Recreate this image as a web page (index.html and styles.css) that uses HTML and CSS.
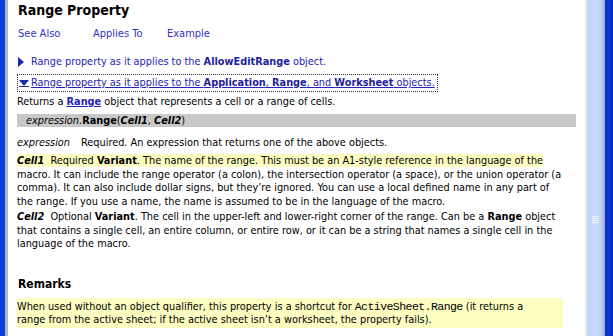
FILE: index.html
```html
<!DOCTYPE html>
<html>
<head>
<meta charset="utf-8">
<link rel="stylesheet" href="styles.css">
</head>
<body>
<div class="window">
  <div class="lborder"></div>
  <div class="content">
    <h1 class="title">Range Property</h1>
    <div class="navlinks">
      <a class="nav">See Also</a>
      <a class="nav">Applies To</a>
      <a class="nav">Example</a>
    </div>
    <div class="applies">
      <span class="tri-right"></span>
      <span class="lnk">Range property as it applies to the <b>AllowEditRange</b> object.</span>
    </div>
    <div class="applies open">
      <span class="focus"><span class="tri-down"></span><span class="lnk u">Range property as it applies to the <b>Application</b>, <b>Range</b>, and <b>Worksheet</b> objects.</span></span>
    </div>
    <p class="para returns">Returns a <a class="reflink">Range</a> object that represents a cell or a range of cells.</p>
    <div class="syntax"><i>expression</i>.<b>Range</b>(<b><i>Cell1</i></b>, <b><i>Cell2</i></b>)</div>
    <p class="para expr"><i class="term">expression</i>Required. An expression that returns one of the above objects.</p>
    <p class="para arg first"><span class="hl"><b><i class="argname">Cell1</i></b>&nbsp;&nbsp;Required <b>Variant</b>. The name of the range. This must be an A1-style reference in the language of the</span> macro. It can include the range operator (a colon), the intersection operator (a space), or the union operator (a comma). It can also include dollar signs, but they’re ignored. You can use a local defined name in any part of the range. If you use a name, the name is assumed to be in the language of the macro.</p>
    <p class="para arg second"><b><i>Cell2</i></b>&nbsp;&nbsp;Optional <b>Variant</b>. The cell in the upper-left and lower-right corner of the range. Can be a <b>Range</b> object that contains a single cell, an entire column, or entire row, or it can be a string that names a single cell in the language of the macro.</p>
    <h2 class="remarks">Remarks</h2>
    <p class="para note">When used without an object qualifier, this property is a shortcut for <code>ActiveSheet.Range</code> (it returns a range from the active sheet; if the active sheet isn’t a worksheet, the property fails).</p>
  </div>
  <div class="vscroll">
    <div class="thumb"><span class="grip"></span></div>
  </div>
  <div class="rborder"></div>
</div>
</body>
</html>
```

FILE: styles.css
```css
html, body {
  margin: 0;
  padding: 0;
  height: 100%;
  overflow: hidden;
  background: #fff;
}
.window {
  display: flex;
  height: 336px;
  width: 613px;
  font-family: "DejaVu Sans", sans-serif;
  font-stretch: condensed;
  font-size: 10.85px;
  color: #000;
}
.lborder {
  width: 5px;
  background: #0a3ddb;
  border-right: 3px solid #b8b6ae;
  flex: none;
}
.content {
  flex: 1;
  padding: 0 0 0 9px;
  overflow: hidden;
}
.title {
  margin: 0 0 0 1px;
  font-size: 14px;
  font-weight: bold;
  line-height: 20px;
}
.navlinks {
  display: flex;
  margin-top: 4px;
  padding-left: 1px;
  line-height: 20px;
}
.nav {
  color: #3232c8;
  font-size: 11px;
}
.nav:nth-child(1) { width: 75px; }
.nav:nth-child(2) { width: 74px; }
.applies {
  margin-top: 10px;
  color: #2323b4;
  line-height: 16px;
  display: flex;
  align-items: center;
  padding-left: 1px;
}
.applies.open {
  margin-top: 4px;
}
.applies b { color: #1e1e9c; }
.tri-right {
  width: 0;
  height: 0;
  border-top: 5px solid transparent;
  border-bottom: 5px solid transparent;
  border-left: 6px solid #1a2aa8;
  margin-right: 7px;
}
.focus {
  display: inline-flex;
  align-items: center;
  border: 1px dotted #333;
  padding: 0 2px 0 0;
  margin-left: -1px;
}
.tri-down {
  width: 0;
  height: 0;
  border-left: 5px solid transparent;
  border-right: 5px solid transparent;
  border-top: 6px solid #1a2aa8;
  margin: 0 2px 0 1px;
  box-shadow: 0 1px 0 #1a2aa8;
}
.lnk.u { text-decoration: underline; }
.para {
  margin: 0;
  line-height: 13.5px;
  width: 546px;
}
.returns { margin-top: 3px; }
.reflink {
  color: #2323b4;
  font-weight: bold;
  text-decoration: underline;
}
.syntax {
  margin-top: 5px;
  width: 559px;
  background: #c8c8c8;
  line-height: 13px;
  padding-left: 9px;
  box-sizing: border-box;
}
.expr { margin-top: 9px; }
.term { margin-right: 11px; }
.arg.first { margin-top: 5px; }
.arg.second { margin-top: 2px; }
.hl {
  background: #fdfdc2;
}
.remarks {
  font-size: 12px;
  font-weight: bold;
  margin: 25px 0 0 1px;
  line-height: 16px;
}
.note {
  margin-top: 6px;
  background: #fdfdc2;
  padding: 2px 14px 1px 0;
  width: 532px;
}
code {
  font-family: "Liberation Mono", monospace;
  font-size: 11.5px;
  letter-spacing: -0.55px;
  line-height: 1;
}
.vscroll {
  width: 26px;
  flex: none;
  display: flex;
  justify-content: flex-end;
  background: #fff;
}
.thumb {
  width: 16px;
  background: linear-gradient(to right, #c3d3fb, #c9d8fd 50%, #b9cbf7);
  border-left: 2px solid #e4e7ee;
  border-right: 2px solid #a8aec4;
  display: flex;
  align-items: center;
  justify-content: center;
}
.grip {
  width: 7px;
  height: 8px;
  background: repeating-linear-gradient(to bottom, #eef3ff 0 1px, transparent 1px 2px);
  margin-top: 104px;
}
.rborder {
  width: 8px;
  flex: none;
  background: linear-gradient(to right, #0032d4, #0a3ad8 50%, #0027b8);
}
```
